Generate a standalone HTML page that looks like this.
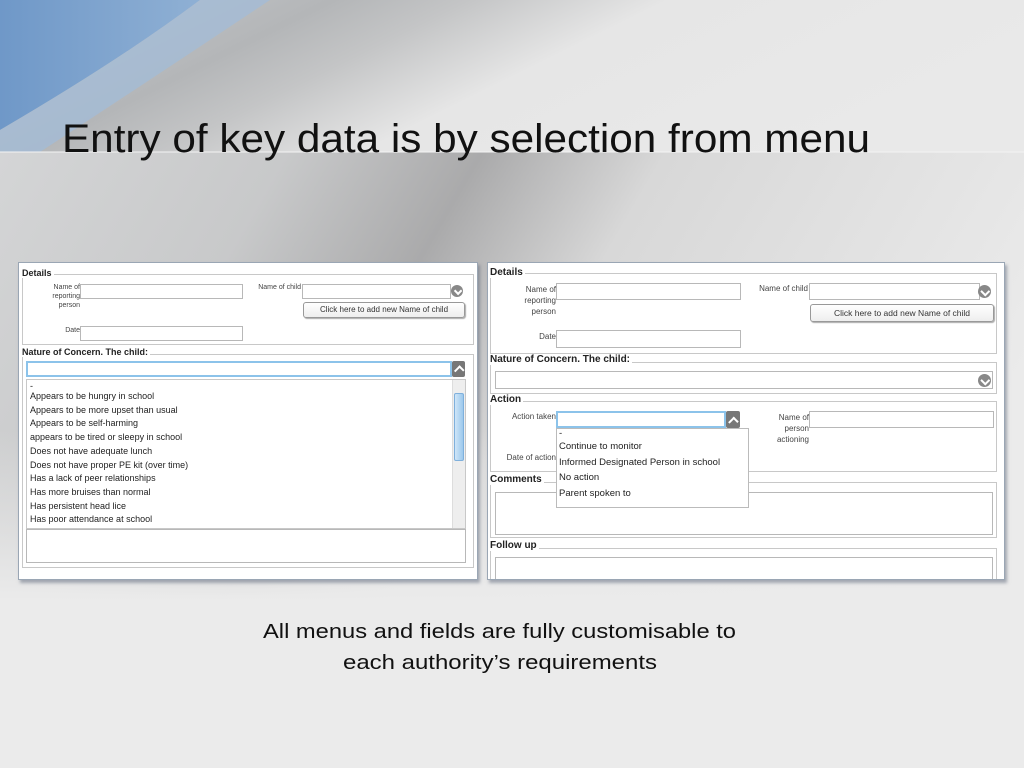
<!DOCTYPE html>
<html><head><meta charset="utf-8">
<style>
*{margin:0;padding:0;box-sizing:border-box}
body{width:1024px;height:768px;position:relative;overflow:hidden;background:#ebebeb;font-family:"Liberation Sans",sans-serif}
.a{position:absolute}
.panel{position:absolute;background:#fff;border:1px solid #9aa6b4;box-shadow:2px 3px 3px rgba(90,100,120,.5);overflow:hidden}
.fs{position:absolute;border:1px solid #c8c8c8}
.lg{position:absolute;background:#fff;font-weight:bold;color:#222;padding-right:2px;white-space:nowrap}
.in{position:absolute;border:1px solid #b8b8b8;background:#fff}
.lb{position:absolute;text-align:right;color:#444;line-height:1.25}
.btn{position:absolute;border:1px solid #999;border-radius:3px;background:linear-gradient(#fff,#eee);color:#333;text-align:center;box-shadow:1px 1px 1px #aaa}
.dd{position:absolute;border-radius:50%;background:#888}
.dd:after{content:"";position:absolute;left:30%;top:25%;width:35%;height:35%;border-right:2px solid #fff;border-bottom:2px solid #fff;transform:rotate(45deg)}
.up:after{top:40%;transform:rotate(-135deg)}
.list div{white-space:nowrap}
</style></head><body>
<svg class="a" style="left:0;top:0" width="1024" height="768">
<defs>
<linearGradient id="g1" x1="0" y1="0" x2="1" y2="0.3">
<stop offset="0" stop-color="#c8cbcf"/><stop offset="0.3" stop-color="#b4b6b8"/><stop offset="0.42" stop-color="#c4c5c6"/><stop offset="0.6" stop-color="#e6e6e6"/><stop offset="1" stop-color="#e9e9e9"/></linearGradient>
<linearGradient id="g2" x1="0" y1="0" x2="1" y2="0.35"><stop offset="0" stop-color="#d4d5d6"/><stop offset="0.25" stop-color="#c8c9ca"/><stop offset="0.42" stop-color="#aaaaab"/><stop offset="0.58" stop-color="#d8d8d8"/><stop offset="1" stop-color="#ebebeb"/></linearGradient>
<linearGradient id="gf" x1="0" y1="0" x2="0" y2="1"><stop offset="0" stop-color="#ebebeb" stop-opacity="0"/><stop offset="1" stop-color="#ebebeb" stop-opacity="1"/></linearGradient>
<linearGradient id="gb" x1="0" y1="0" x2="1" y2="0"><stop offset="0" stop-color="#6f98c8"/><stop offset="1" stop-color="#8fb0d4"/></linearGradient>
</defs>
<rect width="1024" height="152" fill="url(#g1)"/>
<rect y="152" width="1024" height="616" fill="url(#g2)"/>
<rect y="430" width="1024" height="170" fill="url(#gf)"/>
<rect y="600" width="1024" height="168" fill="#ebebeb"/>
<path d="M0 0 H200 Q120 60 0 130 Z" fill="url(#gb)"/>
<path d="M200 0 H270 Q150 80 40 152 H0 V130 Q120 60 200 0Z" fill="#a4bcd6" opacity=".8"/>
<path d="M0 152 H1024" stroke="#f4f4f4" stroke-width="1"/>
<text x="62" y="152" font-size="40" fill="#111" textLength="808" lengthAdjust="spacingAndGlyphs" font-family="Liberation Sans">Entry of key data is by selection from menu</text>
<text x="263" y="638" font-size="20" fill="#111" textLength="473" lengthAdjust="spacingAndGlyphs" font-family="Liberation Sans">All menus and fields are fully customisable to</text>
<text x="343" y="669" font-size="20" fill="#111" textLength="314" lengthAdjust="spacingAndGlyphs" font-family="Liberation Sans">each authority’s requirements</text>
</svg>

<!-- LEFT PANEL -->
<div class="panel" style="left:18px;top:262px;width:460px;height:318px">
 <div class="fs" style="left:3px;top:11px;width:452px;height:71px"></div>
 <div class="lg" style="left:3px;top:5px;font-size:9px">Details</div>
 <div class="lb" style="left:20px;top:21px;width:41px;font-size:7px">Name of<br>reporting<br>person</div>
 <div class="in" style="left:61px;top:21px;width:163px;height:15px"></div>
 <div class="lb" style="left:220px;top:21px;width:62px;font-size:7px">Name of child</div>
 <div class="in" style="left:283px;top:21px;width:149px;height:15px"></div>
 <div class="dd" style="left:432px;top:22px;width:12px;height:12px"></div>
 <div class="btn" style="left:284px;top:39px;width:162px;height:16px;font-size:8px;line-height:14px">Click here to add new Name of child</div>
 <div class="lb" style="left:20px;top:64px;width:41px;font-size:7px">Date</div>
 <div class="in" style="left:61px;top:63px;width:163px;height:15px"></div>
 <div class="fs" style="left:3px;top:91px;width:452px;height:214px"></div>
 <div class="lg" style="left:3px;top:84px;font-size:9px">Nature of Concern. The child:</div>
 <div class="in" style="left:7px;top:98px;width:426px;height:16px;border:2px solid #8cc3ea"></div>
 <div class="dd up" style="left:433px;top:98px;width:13px;height:16px;border-radius:2px;background:#777"></div>
 <div class="list a" style="left:7px;top:116px;width:440px;height:150px;background:#fff;border:1px solid #c8c8c8;font-size:9px;color:#222;line-height:13.7px;padding:2px 0 0 3px;overflow:hidden">
  <div style="line-height:8px">-</div>
  <div>Appears to be hungry in school</div><div>Appears to be more upset than usual</div><div>Appears to be self-harming</div><div>appears to be tired or sleepy in school</div><div>Does not have adequate lunch</div><div>Does not have proper PE kit (over time)</div><div>Has a lack of peer relationships</div><div>Has more bruises than normal</div><div>Has persistent head lice</div><div>Has poor attendance at school</div>
  <div class="a" style="right:0;top:0;width:13px;height:148px;background:#eee;border-left:1px solid #ddd"><div class="a" style="left:1px;top:13px;width:10px;height:68px;background:linear-gradient(90deg,#cfe6f8,#9cc8ec);border:1px solid #7fb0dc;border-radius:2px"></div></div>
 </div>
 <div class="in" style="left:7px;top:266px;width:440px;height:34px"></div>
</div>

<!-- RIGHT PANEL -->
<div class="panel" style="left:487px;top:262px;width:518px;height:318px">
 <div class="fs" style="left:2px;top:10px;width:507px;height:81px"></div>
 <div class="lg" style="left:2px;top:4px;font-size:10px">Details</div>
 <div class="lb" style="left:20px;top:21px;width:48px;font-size:8px;line-height:11px">Name of<br>reporting<br>person</div>
 <div class="in" style="left:68px;top:20px;width:185px;height:17px"></div>
 <div class="lb" style="left:250px;top:21px;width:70px;font-size:8px">Name of child</div>
 <div class="in" style="left:321px;top:20px;width:171px;height:17px"></div>
 <div class="dd" style="left:490px;top:22px;width:13px;height:13px"></div>
 <div class="btn" style="left:322px;top:41px;width:184px;height:18px;font-size:8.5px;line-height:16px">Click here to add new Name of child</div>
 <div class="lb" style="left:20px;top:69px;width:48px;font-size:8px">Date</div>
 <div class="in" style="left:68px;top:67px;width:185px;height:18px"></div>
 <div class="fs" style="left:2px;top:99px;width:507px;height:32px"></div>
 <div class="lg" style="left:2px;top:91px;font-size:10px">Nature of Concern. The child:</div>
 <div class="in" style="left:7px;top:108px;width:498px;height:18px"></div>
 <div class="dd" style="left:490px;top:111px;width:13px;height:13px"></div>
 <div class="fs" style="left:2px;top:138px;width:507px;height:71px"></div>
 <div class="lg" style="left:2px;top:131px;font-size:10px">Action</div>
 <div class="lb" style="left:10px;top:149px;width:58px;font-size:8px">Action taken</div>
 <div class="in" style="left:68px;top:148px;width:170px;height:17px;border:2px solid #8cc3ea"></div>
 <div class="dd up" style="left:238px;top:148px;width:14px;height:17px;border-radius:2px;background:#777"></div>
 <div class="lb" style="left:270px;top:149px;width:51px;font-size:8px;line-height:11px">Name of<br>person<br>actioning</div>
 <div class="in" style="left:321px;top:148px;width:185px;height:17px"></div>
 <div class="lb" style="left:8px;top:190px;width:60px;font-size:8px">Date of action</div>
 <div class="fs" style="left:2px;top:219px;width:507px;height:56px"></div>
 <div class="lg" style="left:2px;top:211px;font-size:10px">Comments</div>
 <div class="in" style="left:7px;top:229px;width:498px;height:43px"></div>
 <div class="fs" style="left:2px;top:285px;width:507px;height:40px"></div>
 <div class="lg" style="left:2px;top:277px;font-size:10px">Follow up</div>
 <div class="in" style="left:7px;top:294px;width:498px;height:30px"></div>
 <div class="list a" style="left:68px;top:165px;width:193px;height:80px;background:#fff;border:1px solid #bbb;font-size:9.5px;color:#222;line-height:15.5px;padding:0 0 0 2px">
  <div style="line-height:10px">-</div><div>Continue to monitor</div><div>Informed Designated Person in school</div><div>No action</div><div>Parent spoken to</div>
 </div>
</div>
</body></html>
